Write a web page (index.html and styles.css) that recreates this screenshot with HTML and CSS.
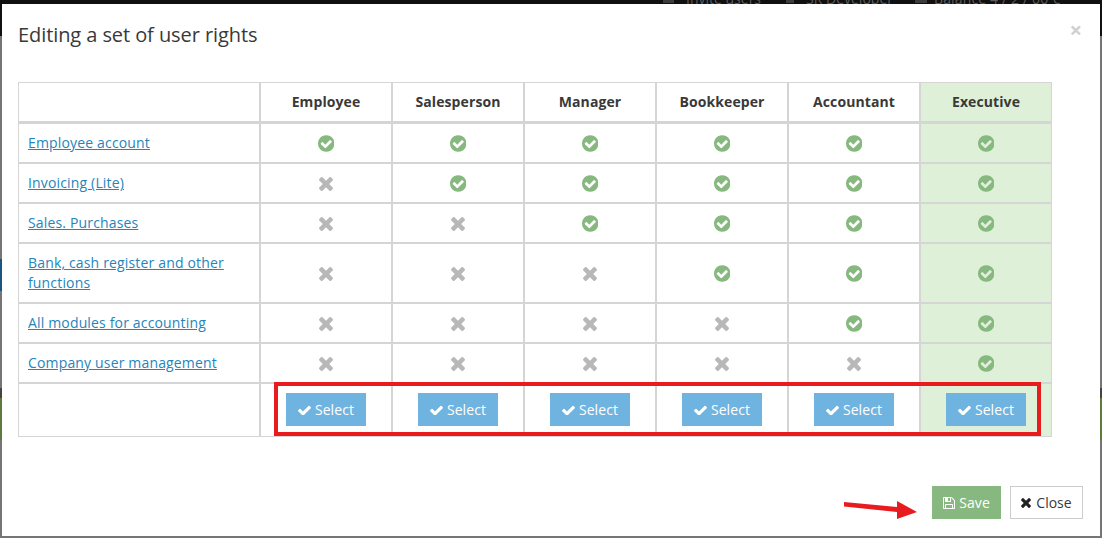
FILE: index.html
```html
<!DOCTYPE html>
<html lang="en">
<head>
<meta charset="utf-8">
<title>Editing a set of user rights</title>
<link rel="stylesheet" href="styles.css">
</head>
<body>
<svg class="defs" aria-hidden="true">
  <symbol id="i-circle" viewBox="128 128 1536 1536"><path d="M1412 734q0-28-18-46l-91-90q-19-19-45-19t-45 19l-408 407-226-226q-19-19-45-19t-45 19l-91 90q-18 18-18 46 0 27 18 45l362 362q19 19 45 19 27 0 46-19l543-543q18-18 18-45zm252 162q0 209-103 385.500t-279.500 279.500-385.500 103-385.500-103-279.500-279.500-103-385.500 103-385.500 279.500-279.500 385.500-103 385.500 103 279.500 279.500 103 385.500z"/></symbol>
  <symbol id="i-times" viewBox="110 258 1188 1188"><path d="M1298 1214q0 40-28 68l-136 136q-28 28-68 28t-68-28l-294-294-294 294q-28 28-68 28t-68-28l-136-136q-28-28-28-68t28-68l294-294-294-294q-28-28-28-68t28-68l136-136q28-28 68-28t68 28l294 294 294-294q28-28 68-28t68 28l136 136q28 28 28 68t-28 68l-294 294 294 294q28 28 28 68z"/></symbol>
  <symbol id="i-check" viewBox="121 262 1550 1150"><path d="M1671 566q0 40-28 68l-724 724-136 136q-28 28-68 28t-68-28l-136-136-362-362q-28-28-28-68t28-68l136-136q28-28 68-28t68 28l294 295 656-657q28-28 68-28t68 28l136 136q28 28 28 68z"/></symbol>
  <symbol id="i-save" viewBox="128 128 1536 1536"><path d="M512 1536h768v-384h-768v384zm896 0h128v-896q0-14-10-38.500t-20-34.500l-281-281q-10-10-34-20t-39-10v416q0 40-28 68t-68 28h-576q-40 0-68-28t-28-68v-416h-128v1280h128v-416q0-40 28-68t68-28h832q40 0 68 28t28 68v416zm-384-928v-320q0-13-9.500-22.500t-22.500-9.500h-192q-13 0-22.500 9.500t-9.500 22.500v320q0 13 9.500 22.500t22.500 9.500h192q13 0 22.500-9.500t9.500-22.500zm640 32v928q0 40-28 68t-68 28h-1344q-40 0-68-28t-28-68v-1344q0-40 28-68t68-28h928q40 0 88 20t76 48l280 280q28 28 48 76t20 88z"/></symbol>
</svg>

<div class="backdrop" aria-hidden="true">
  <div class="nav">
    <span class="nav-ico nav-ico-invite"></span>
    <span class="nav-item">Invite users</span>
    <span class="nav-ico nav-ico-dev"></span>
    <span class="nav-item">SR Developer</span>
    <span class="nav-ico nav-ico-balance"></span>
    <span class="nav-item nav-balance">Balance 4 / 2 / 00 €</span>
    <span class="nav-ico nav-ico-end"></span>
  </div>
  <div class="band band-grey-a"></div>
  <div class="band band-blue"><span class="band-left"></span></div>
  <div class="band band-grey-b"></div>
  <div class="band band-dark"></div>
  <div class="band band-green"></div>
  <div class="band band-grey-c"></div>
</div>

<div class="modal">
  <div class="modal-head">
    <h4 class="modal-title">Editing a set of user rights</h4>
    <span class="modal-x">×</span>
  </div>

  <table class="rights">
    <colgroup>
      <col class="col-name"><col class="col-role"><col class="col-role"><col class="col-role"><col class="col-role"><col class="col-role"><col class="col-last">
    </colgroup>
    <thead>
      <tr>
        <th></th><th>Employee</th><th>Salesperson</th><th>Manager</th><th>Bookkeeper</th><th>Accountant</th><th class="hl">Executive</th>
      </tr>
    </thead>
    <tbody>
      <tr>
        <td class="name"><a href="#">Employee account</a></td>
        <td><svg class="yes"><use href="#i-circle"/></svg></td>
        <td><svg class="yes"><use href="#i-circle"/></svg></td>
        <td><svg class="yes"><use href="#i-circle"/></svg></td>
        <td><svg class="yes"><use href="#i-circle"/></svg></td>
        <td><svg class="yes"><use href="#i-circle"/></svg></td>
        <td class="hl"><svg class="yes"><use href="#i-circle"/></svg></td>
      </tr>
      <tr>
        <td class="name"><a href="#">Invoicing (Lite)</a></td>
        <td><svg class="no"><use href="#i-times"/></svg></td>
        <td><svg class="yes"><use href="#i-circle"/></svg></td>
        <td><svg class="yes"><use href="#i-circle"/></svg></td>
        <td><svg class="yes"><use href="#i-circle"/></svg></td>
        <td><svg class="yes"><use href="#i-circle"/></svg></td>
        <td class="hl"><svg class="yes"><use href="#i-circle"/></svg></td>
      </tr>
      <tr>
        <td class="name"><a href="#">Sales. Purchases</a></td>
        <td><svg class="no"><use href="#i-times"/></svg></td>
        <td><svg class="no"><use href="#i-times"/></svg></td>
        <td><svg class="yes"><use href="#i-circle"/></svg></td>
        <td><svg class="yes"><use href="#i-circle"/></svg></td>
        <td><svg class="yes"><use href="#i-circle"/></svg></td>
        <td class="hl"><svg class="yes"><use href="#i-circle"/></svg></td>
      </tr>
      <tr>
        <td class="name"><a href="#">Bank, cash register and other functions</a></td>
        <td><svg class="no"><use href="#i-times"/></svg></td>
        <td><svg class="no"><use href="#i-times"/></svg></td>
        <td><svg class="no"><use href="#i-times"/></svg></td>
        <td><svg class="yes"><use href="#i-circle"/></svg></td>
        <td><svg class="yes"><use href="#i-circle"/></svg></td>
        <td class="hl"><svg class="yes"><use href="#i-circle"/></svg></td>
      </tr>
      <tr>
        <td class="name"><a href="#">All modules for accounting</a></td>
        <td><svg class="no"><use href="#i-times"/></svg></td>
        <td><svg class="no"><use href="#i-times"/></svg></td>
        <td><svg class="no"><use href="#i-times"/></svg></td>
        <td><svg class="no"><use href="#i-times"/></svg></td>
        <td><svg class="yes"><use href="#i-circle"/></svg></td>
        <td class="hl"><svg class="yes"><use href="#i-circle"/></svg></td>
      </tr>
      <tr>
        <td class="name"><a href="#">Company user management</a></td>
        <td><svg class="no"><use href="#i-times"/></svg></td>
        <td><svg class="no"><use href="#i-times"/></svg></td>
        <td><svg class="no"><use href="#i-times"/></svg></td>
        <td><svg class="no"><use href="#i-times"/></svg></td>
        <td><svg class="no"><use href="#i-times"/></svg></td>
        <td class="hl"><svg class="yes"><use href="#i-circle"/></svg></td>
      </tr>
      <tr class="actions">
        <td></td>
        <td><button class="btn btn-select"><svg class="ico-check"><use href="#i-check"/></svg>Select</button></td>
        <td><button class="btn btn-select"><svg class="ico-check"><use href="#i-check"/></svg>Select</button></td>
        <td><button class="btn btn-select"><svg class="ico-check"><use href="#i-check"/></svg>Select</button></td>
        <td><button class="btn btn-select"><svg class="ico-check"><use href="#i-check"/></svg>Select</button></td>
        <td><button class="btn btn-select"><svg class="ico-check"><use href="#i-check"/></svg>Select</button></td>
        <td class="hl"><button class="btn btn-select"><svg class="ico-check"><use href="#i-check"/></svg>Select</button></td>
      </tr>
    </tbody>
  </table>

  <div class="modal-foot">
    <button class="btn btn-save"><svg class="ico-save"><use href="#i-save"/></svg>Save</button>
    <button class="btn btn-close"><svg class="ico-times"><use href="#i-times"/></svg>Close</button>
  </div>

  <div class="mark-box"></div>
  <svg class="mark-arrow" viewBox="0 0 76 22"><polygon points="1,5 1,9.500 54,15 54,22 74,15 54,4 54,10"/></svg>
</div>
</body>
</html>
```
FILE: styles.css
```css
* { box-sizing: border-box; }

html, body {
  margin: 0;
  width: 1102px;
  height: 538px;
  overflow: hidden;
}

body {
  position: relative;
  font-family: "Open Sans", "Liberation Sans", sans-serif;
  font-size: 14px;
  line-height: 20px;
  color: #393939;
  background: #707070;
}

.defs { position: absolute; width: 0; height: 0; }

/* dimmed page behind the dialog */
.backdrop { display: flex; flex-direction: column; height: 538px; }
.nav {
  height: 36px;
  background: #101010;
  overflow: hidden;
  color: #5c5c5c;
  display: flex;
  align-items: flex-start;
}
.nav-item { margin-top: -11px; margin-left: 12px; white-space: nowrap; }
.nav-balance { margin-left: 7px; letter-spacing: 0.15px; }
.nav-ico { height: 3px; background: #3c3c3c; flex: none; }
.nav-ico-invite { width: 11px; margin-left: 663px; }
.nav-ico-dev { width: 8px; margin-left: 25px; }
.nav-ico-balance { width: 12px; margin-left: 22px; }
.nav-ico-end { width: 14px; margin-left: 42px; }

.band-grey-a { height: 223px; background: #757575; }
.band-blue { height: 32px; background: #757575; }
.band-left { display: block; width: 2px; height: 100%; background: #1c5580; }
.band-grey-b { height: 97px; background: #757575; }
.band-dark { height: 10px; background: #444; }
.band-green { height: 42px; background: #5f7a3a; }
.band-grey-c { flex: 1; background: #757575; }

/* dialog */
.modal {
  position: absolute;
  left: 2px;
  top: 4px;
  width: 1098px;
  height: 532px;
  background: #fff;
  display: flex;
  flex-direction: column;
  padding: 0 16px;
}
.modal-head {
  height: 78px;
  display: flex;
  justify-content: space-between;
  align-items: flex-start;
  padding-top: 17px;
}
.modal-title {
  margin: 0;
  font-size: 20px;
  font-weight: 400;
  line-height: 28px;
  letter-spacing: -0.08px;
  color: #393939;
}
.modal-x {
  margin: -2px 2px 0 0;
  font-size: 22px;
  font-weight: 700;
  line-height: 21px;
  color: #d0d0d0;
}

/* rights table */
.rights {
  table-layout: fixed;
  width: 1034px;
  border-collapse: separate;
  border-spacing: 0;
  border-top: 1px solid #d5d5d5;
  border-left: 1px solid #d5d5d5;
}
.col-name { width: 242px; }
.col-role { width: 132px; }
.col-last { width: 131px; }

.rights th, .rights td {
  padding: 9px;
  text-align: center;
  vertical-align: middle;
  border-right: 2px solid #d5d5d5;
  border-bottom: 2px solid #d5d5d5;
}
.rights th {
  font-weight: 700;
  letter-spacing: 0.1px;
  border-bottom-width: 3px;
}
.rights th:last-child, .rights td:last-child { border-right-width: 1px; }
.rights .actions td { padding: 9px 9px 10px; border-bottom-width: 1px; }
.rights .hl { background: #dff0d8; }
.rights td.name { text-align: left; }
.rights a { color: #2585bb; text-decoration: underline; letter-spacing: 0.16px; }

.yes, .no { display: block; margin: 0 auto; }
.yes { width: 16.500px; height: 17px; fill: #87b87f; }
.no { width: 14px; height: 14px; margin: 1px auto -1px; fill: #b8b8b8; }

/* buttons */
.btn {
  display: inline-flex;
  align-items: center;
  justify-content: center;
  height: 33px;
  padding: 0;
  border: 0;
  border-radius: 0;
  font: inherit;
  vertical-align: top;
}
.btn-select { width: 80px; background: #6fb3e0; color: #fff; letter-spacing: 0.1px; }
.ico-check { width: 13px; height: 10px; margin-right: 4px; fill: #fff; }

.modal-foot {
  margin-top: auto;
  padding: 0 1px 17px 0;
  display: flex;
  justify-content: flex-end;
  gap: 9px;
}
.btn-save { width: 69px; background: #87b87f; color: #fff; letter-spacing: 0.1px; }
.ico-save { width: 12px; height: 12px; margin-right: 4px; fill: #fff; }
.btn-close {
  width: 73px;
  background: #fff;
  border: 1px solid #ccc;
  color: #393939;
}
.ico-times { width: 10px; height: 10px; margin-right: 5px; fill: #222; }

/* annotations drawn over the screenshot */
.mark-box {
  position: absolute;
  left: 272px;
  top: 378px;
  width: 767px;
  height: 54px;
  border: 4px solid #e81c1f;
}
.mark-arrow {
  position: absolute;
  left: 841px;
  top: 493px;
  width: 76px;
  height: 22px;
  fill: #e81c1f;
}
```
